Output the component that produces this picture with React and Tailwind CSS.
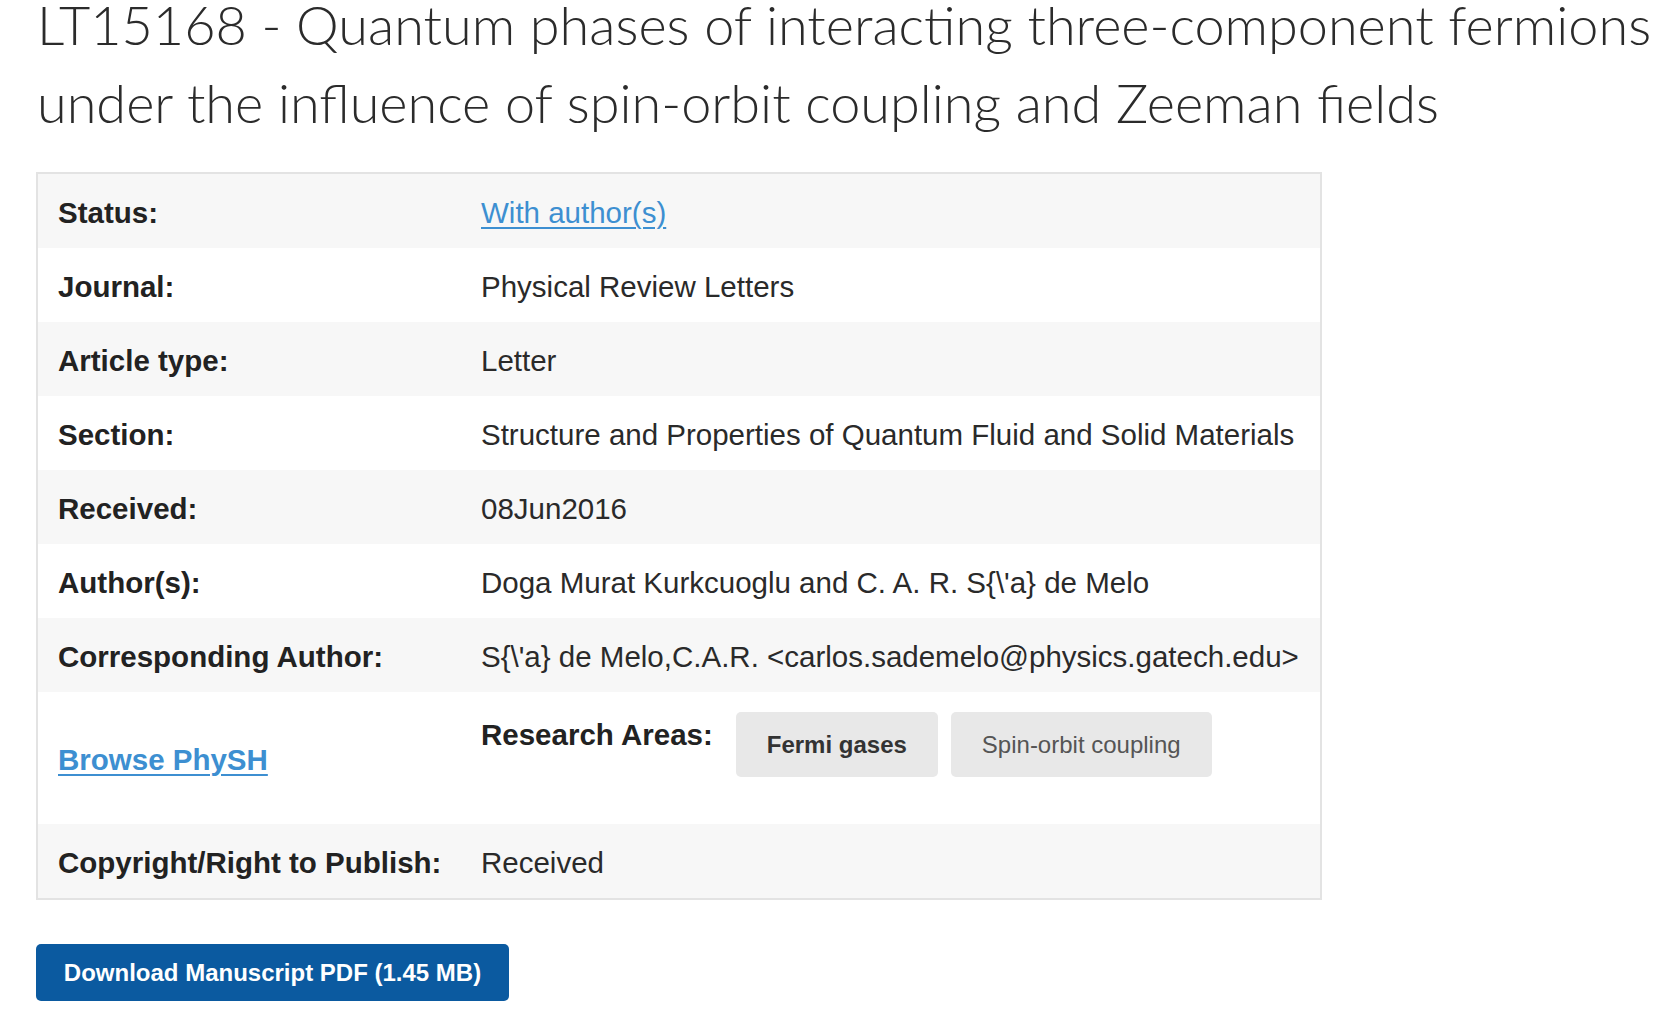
import React from 'react';

const rows = [
    { label: 'Status:', value: 'With author(s)', link: true },
    { label: 'Journal:', value: 'Physical Review Letters' },
    { label: 'Article type:', value: 'Letter' },
    { label: 'Section:', value: 'Structure and Properties of Quantum Fluid and Solid Materials' },
    { label: 'Received:', value: '08Jun2016' },
    { label: 'Author(s):', value: "Doga Murat Kurkcuoglu and C. A. R. S{\\'a} de Melo" },
    { label: 'Corresponding Author:', value: "S{\\'a} de Melo,C.A.R. <carlos.sademelo@physics.gatech.edu>" },
];

const App = () => {
    return (
        <div className="w-full min-h-screen bg-white pl-[36px] overflow-hidden">
            {/* Title */}
            <h1 className="-mt-[14px] pl-[1px] text-[54px] leading-[78px] text-[#2b2b2b] font-light whitespace-nowrap" style={{ fontFamily: 'Lato, "Open Sans", sans-serif' }}>
                LT15168 - Quantum phases of interacting three-component fermions
                <br />
                under the influence of spin-orbit coupling and Zeeman fields
            </h1>

            {/* Details table */}
            <div className="mt-[30px] w-[1286px] border-2 border-[#e3e3e3] font-['Liberation_Sans',Arial,sans-serif] text-[29.5px]">
                {rows.map((row, i) => (
                    <div key={row.label} className={`flex items-center h-[74px] pl-[20px] pt-[4px] ${i % 2 === 0 ? 'bg-[#f7f7f7]' : 'bg-white'}`}>
                        <div className="w-[423px] font-bold text-[#222]">{row.label}</div>
                        {row.link ? (
                            <a className="text-[#3d8fd1] underline underline-offset-[4px] decoration-[2px]">{row.value}</a>
                        ) : (
                            <div className="text-[#2a2a2a]">{row.value}</div>
                        )}
                    </div>
                ))}

                {/* Research areas */}
                <div className="flex h-[132px] pl-[20px] bg-white">
                    <div className="w-[423px] flex items-center pt-[4px]">
                        <a className="font-bold text-[#3d8fd1] underline underline-offset-[4px] decoration-[2px]">Browse PhySH</a>
                    </div>
                    <div className="flex items-start pt-[20px] gap-[13px]">
                        <div className="font-bold text-[#222] leading-[42px] mt-[2px] mr-[10px]">Research Areas:</div>
                        <span className="h-[65px] px-[31px] flex items-center rounded-[5px] bg-[#e8e8e8] text-[24px] font-bold text-[#333]">Fermi gases</span>
                        <span className="h-[65px] px-[31px] flex items-center rounded-[5px] bg-[#e8e8e8] text-[24px] text-[#555]">Spin-orbit coupling</span>
                    </div>
                </div>

                <div className="flex items-center h-[74px] pl-[20px] pt-[4px] bg-[#f7f7f7]">
                    <div className="w-[423px] font-bold text-[#222]">Copyright/Right to Publish:</div>
                    <div className="text-[#2a2a2a]">Received</div>
                </div>
            </div>

            {/* Download */}
            <button className="mt-[44px] h-[57px] w-[473px] rounded-[5px] bg-[#0b5aa0] text-white font-bold text-[24px] font-['Liberation_Sans',Arial,sans-serif]">
                Download Manuscript PDF (1.45 MB)
            </button>
        </div>
    );
};

export default App;
